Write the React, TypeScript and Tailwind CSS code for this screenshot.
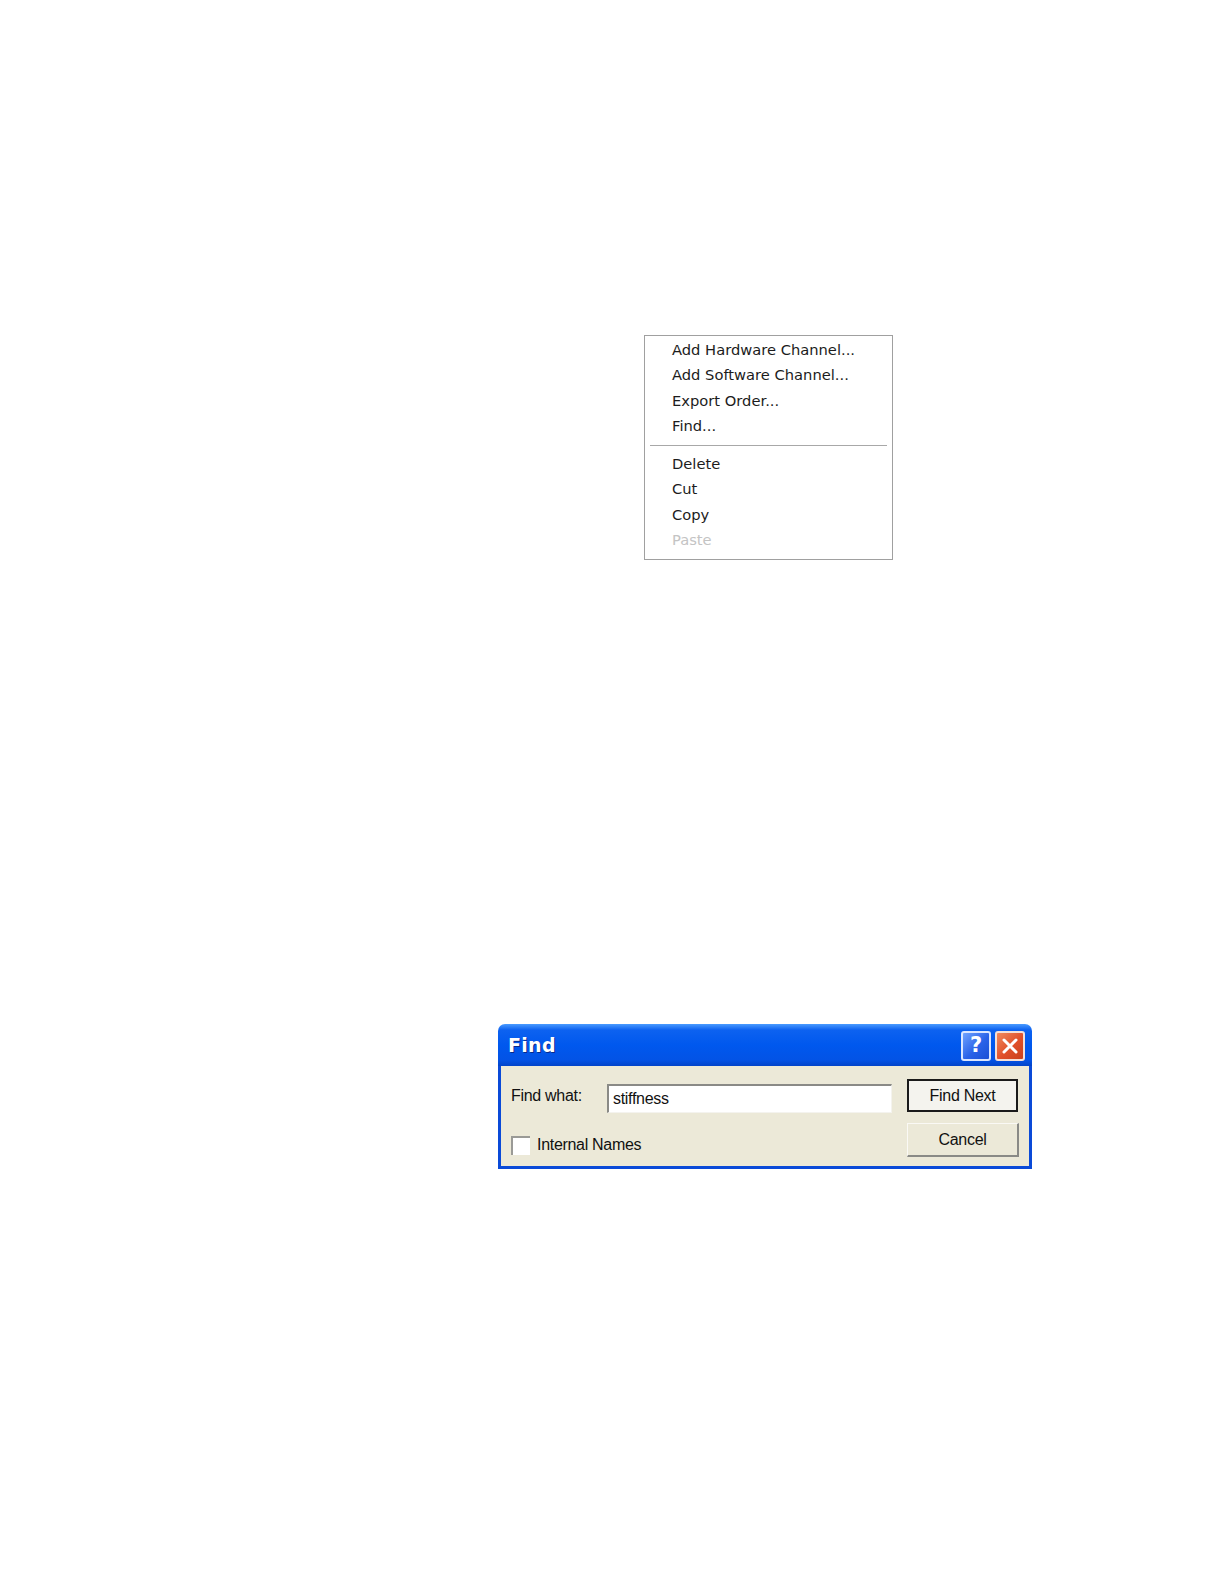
const menuItems = [
  { label: "Add Hardware Channel...", disabled: false },
  { label: "Add Software Channel...", disabled: false },
  { label: "Export Order...", disabled: false },
  { label: "Find...", disabled: false },
];
const editItems = [
  { label: "Delete", disabled: false },
  { label: "Cut", disabled: false },
  { label: "Copy", disabled: false },
  { label: "Paste", disabled: true },
];

const MenuRow = ({ label, disabled }: { label: string; disabled: boolean }) => (
  <div
    className={`h-[25.5px] flex items-center pl-[27px] text-[14.7px] ${
      disabled ? "text-[#c4c4c4]" : "text-[#1c1c1c]"
    }`}
  >
    {label}
  </div>
);

const ContextMenu = () => (
  <div className="w-[249px] h-[225px] border border-[#a0a0a0] bg-white pt-[1px] font-['DejaVu_Sans',sans-serif]">
    {menuItems.map((item) => (
      <MenuRow key={item.label} {...item} />
    ))}
    <div className="h-[12px] flex items-center px-[5px]">
      <div className="w-full border-t border-[#a8a8a8]" />
    </div>
    {editItems.map((item) => (
      <MenuRow key={item.label} {...item} />
    ))}
  </div>
);

const FindDialog = () => (
  <div className="w-[534px] font-['Liberation_Sans',Arial,sans-serif]">
    {/* title bar */}
    <div className="h-[42px] rounded-t-[7px] bg-[linear-gradient(to_bottom,#4a9bff_0%,#0d62f0_14%,#0058ee_50%,#0353e6_85%,#0244c9_100%)] flex items-center pl-[10px] pr-[7px]">
      <span className="text-white font-bold text-[19px] font-['DejaVu_Sans',sans-serif] tracking-[0.3px] [text-shadow:1px_1px_0_#0a2a8a]">
        Find
      </span>
      <div className="ml-auto flex gap-[4px] mt-[2px]">
        <div className="w-[30px] h-[30px] rounded-[3px] border-2 border-[#dbe6ff] bg-[linear-gradient(135deg,#6fa2ff,#2a62e8_55%,#1a4fd6)] flex items-center justify-center text-white font-bold text-[21px] font-['DejaVu_Sans',sans-serif]">
          ?
        </div>
        <div className="w-[30px] h-[30px] rounded-[3px] border-2 border-[#f4e0d8] bg-[linear-gradient(135deg,#f08a5e,#e0502a_55%,#c8401e)] flex items-center justify-center">
          <svg width="18" height="18" viewBox="0 0 18 18">
            <path d="M3 3 L15 15 M15 3 L3 15" stroke="white" strokeWidth="3" strokeLinecap="round" />
          </svg>
        </div>
      </div>
    </div>
    {/* body */}
    <div className="border-x-[3px] border-b-[3px] border-[#0a4ad8] bg-[#ece9d8] h-[103px] px-[10px] pt-[12px] text-[16px] text-[#111]">
      <div className="flex items-center">
        <span className="w-[96px] tracking-[-0.3px]">Find what:</span>
        <div className="w-[285px] h-[29px] mt-[6px] bg-white border-t-2 border-l-2 border-t-[#8a8a86] border-l-[#8a8a86] border-b border-r border-b-[#f4f3ee] border-r-[#f4f3ee] flex items-center pl-[4px] tracking-[-0.3px]">
          stiffness
        </div>
        <div className="ml-[15px] w-[111px] h-[33px] border-2 border-[#1a1a1a] bg-[#f4f3ee] flex items-center justify-center tracking-[-0.3px]">
          Find Next
        </div>
      </div>
      <div className="flex items-start mt-[10px]">
        <div className="flex items-center mt-[10px]">
          <div className="w-[19px] h-[19px] bg-white border-t-2 border-l-2 border-[#9a9a96] border-b-0 border-r-0" />
          <span className="ml-[7px] tracking-[-0.3px]">Internal Names</span>
        </div>
        <div className="ml-auto w-[112px] h-[34px] bg-[#ece9d8] border-r-2 border-b-2 border-r-[#8a8a86] border-b-[#8a8a86] border-t border-l border-t-[#faf9f5] border-l-[#faf9f5] flex items-center justify-center tracking-[-0.3px]">
          Cancel
        </div>
      </div>
    </div>
  </div>
);

export default function App() {
  return (
    <div className="bg-white">
      <div className="pt-[335px] pl-[644px]">
        <ContextMenu />
      </div>
      <div className="mt-[464px] pl-[498px]">
        <FindDialog />
      </div>
    </div>
  );
}
